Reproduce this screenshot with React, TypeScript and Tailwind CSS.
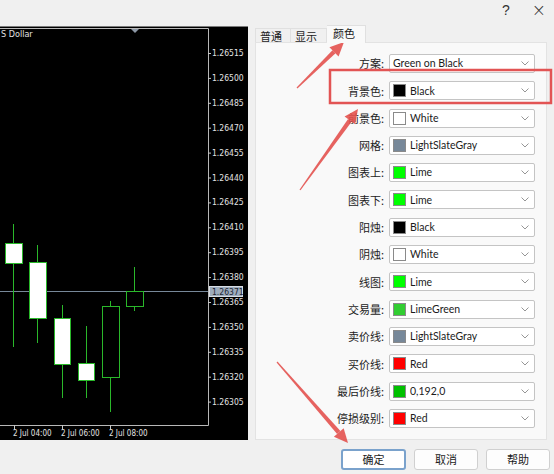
import React from "react";

type Row = { label: string; name: string; color?: string };

const rows: Row[] = [
  { label: "方案:", name: "Green on Black" },
  { label: "背景色:", name: "Black", color: "#000000" },
  { label: "前景色:", name: "White", color: "#ffffff" },
  { label: "网格:", name: "LightSlateGray", color: "#778899" },
  { label: "图表上:", name: "Lime", color: "#00ff00" },
  { label: "图表下:", name: "Lime", color: "#00ff00" },
  { label: "阳烛:", name: "Black", color: "#000000" },
  { label: "阴烛:", name: "White", color: "#ffffff" },
  { label: "线图:", name: "Lime", color: "#00ff00" },
  { label: "交易量:", name: "LimeGreen", color: "#32cd32" },
  { label: "卖价线:", name: "LightSlateGray", color: "#778899" },
  { label: "买价线:", name: "Red", color: "#ff0000" },
  { label: "最后价线:", name: "0,192,0", color: "#00c000" },
  { label: "停损级别:", name: "Red", color: "#ff0000" },
];

const prices = [
  "1.26515", "1.26500", "1.26485", "1.26470", "1.26455", "1.26440", "1.26425", "1.26410",
  "1.26395", "1.26380", "1.26365", "1.26350", "1.26335", "1.26320", "1.26305",
];

// x, width, body top, body bottom, wick top, wick bottom, hollow (bullish)
const candles = [
  { x: 5, w: 17, top: 243, bot: 263, hi: 224, lo: 347, up: false },
  { x: 29, w: 17, top: 262, bot: 318, hi: 245, lo: 343, up: false },
  { x: 54, w: 16, top: 318, bot: 364, hi: 305, lo: 398, up: false },
  { x: 78, w: 16, top: 363, bot: 380, hi: 326, lo: 398, up: false },
  { x: 102, w: 17, top: 306, bot: 377, hi: 301, lo: 412, up: true },
  { x: 126, w: 17, top: 291, bot: 306, hi: 267, lo: 311, up: true },
];

const axisFont = "'DejaVu Sans Condensed','DejaVu Sans', sans-serif";

function Chart() {
  return (
    <svg width={248} height={414} viewBox="0 26 248 414" className="block">
      <rect x={0} y={26} width={248} height={414} fill="#000" />
      <line x1={0} y1={26.5} x2={248} y2={26.5} stroke="#7a7a7a" />
      <line x1={0} y1={28.5} x2={208.5} y2={28.5} stroke="#b8b8b8" />
      <line x1={208.5} y1={28.5} x2={208.5} y2={425.5} stroke="#b8b8b8" />
      <line x1={0} y1={425.5} x2={208.5} y2={425.5} stroke="#b8b8b8" />
      <polygon points="131,29 139,29 135,33" fill="#8d98a6" />
      <text x={1} y={37} fontSize={9} fill="#e0e0e0" fontFamily={axisFont}>S Dollar</text>

      {prices.map((p, i) => {
        const y = 53 + i * 24.9;
        return (
          <g key={p}>
            <line x1={208} y1={y + 0.5} x2={211} y2={y + 0.5} stroke="#c8c8c8" />
            <text x={212} y={y + 3} fontSize={8.5} fill="#e4e4e4" fontFamily={axisFont}>{p}</text>
          </g>
        );
      })}

      {/* bid line */}
      <line x1={0} y1={291.5} x2={208} y2={291.5} stroke="#778899" />
      <rect x={209.5} y={286.5} width={33} height={10} fill="#9eacbd" stroke="#d8dde4" />
      <text x={212} y={294.5} fontSize={8.5} fill="#1d2633" fontFamily={axisFont}>1.26371</text>

      {candles.map((c, i) => {
        const cx = c.x + Math.floor(c.w / 2) + 0.5;
        return (
          <g key={i}>
            <line x1={cx} y1={c.hi} x2={cx} y2={c.top} stroke="#2ab82a" />
            <line x1={cx} y1={c.bot} x2={cx} y2={c.lo} stroke="#2ab82a" />
            <rect x={c.x + 0.5} y={c.top + 0.5} width={c.w} height={c.bot - c.top} fill={c.up ? "#000" : "#fff"} stroke="#2ab82a" />
          </g>
        );
      })}

      {[
        { x: 14, t: "2 Jul 04:00" },
        { x: 62, t: "2 Jul 06:00" },
        { x: 110, t: "2 Jul 08:00" },
      ].map((l) => (
        <g key={l.t}>
          <line x1={l.x + 0.5} y1={425} x2={l.x + 0.5} y2={429} stroke="#c8c8c8" />
          <text x={l.x - 1} y={436} fontSize={8} fill="#e4e4e4" fontFamily={axisFont}>{l.t}</text>
        </g>
      ))}
    </svg>
  );
}

function Chevron() {
  return (
    <svg width={8} height={5} viewBox="0 0 8 5" className="shrink-0">
      <polyline points="0.5,0.5 4,4 7.5,0.5" fill="none" stroke="#8a8a8a" strokeWidth={0.9} />
    </svg>
  );
}

function Arrow({ from, to }: { from: [number, number]; to: [number, number] }) {
  const dx = to[0] - from[0];
  const dy = to[1] - from[1];
  const len = Math.hypot(dx, dy);
  const ux = dx / len;
  const uy = dy / len;
  const px = -uy;
  const py = ux;
  const bx = to[0] - ux * 14;
  const by = to[1] - uy * 14;
  const shaft = [
    [from[0] + px * 0.6, from[1] + py * 0.6],
    [bx + px * 2.2, by + py * 2.2],
    [bx - px * 2.2, by - py * 2.2],
    [from[0] - px * 0.6, from[1] - py * 0.6],
  ];
  const head = [to, [bx + px * 6.5, by + py * 6.5], [bx - px * 6.5, by - py * 6.5]];
  const pts = (a: number[][]) => a.map((p) => p.join(",")).join(" ");
  return (
    <g fill="#e4524f" opacity={0.9}>
      <polygon points={pts(shaft)} />
      <polygon points={pts(head)} />
    </g>
  );
}

export default function App() {
  return (
    <div className="relative w-[554px] h-[474px] bg-[#f0f0f0] overflow-hidden font-['Noto_Sans_CJK_SC',sans-serif] text-[#1b1b1b]">
      {/* Title bar */}
      <div className="h-[26px] flex items-start justify-end pr-[8px] pt-[1px] gap-[22px] text-[#333]">
        <span className="text-[14px] leading-[18px] font-['Liberation_Sans',sans-serif]">?</span>
        <span className="text-[17px] leading-[18px] font-['DejaVu_Sans',sans-serif] font-light">×</span>
      </div>

      <div className="flex h-[414px]">
        <div className="w-[248px] shrink-0">
          <Chart />
        </div>

        <div className="ml-[7px] w-[292px] flex flex-col">
          {/* Tabs */}
          <div className="h-[16px] flex items-end text-[11px]">
            <div className="w-[36px] h-[14px] border border-b-0 border-[#e0e0e0] bg-[#f0f0f0] pl-[4px] leading-[14px]">普通</div>
            <div className="w-[36px] h-[14px] border border-b-0 border-l-0 border-[#e0e0e0] bg-[#f0f0f0] pl-[4px] leading-[14px]">显示</div>
            <div className="w-[39px] h-[18px] border border-b-0 border-l-0 border-[#e0e0e0] bg-[#f9f9f9] pl-[6px] leading-[15px] relative z-10 -mb-px">颜色</div>
          </div>

          {/* Panel */}
          <div className="flex-1 border border-[#e3e3e3] bg-[#f9f9f9] pt-[11px] flex flex-col gap-[8.3px]">
            {rows.map((r, i) => (
              <div key={i} className="flex items-center h-[19px]">
                <div className="w-[128px] text-right text-[11px] text-[#222]">{r.label}</div>
                <div className="ml-[5px] w-[146px] h-[19px] bg-white border border-[#c4c4c4] rounded-[2px] flex items-center pl-[3px] pr-[5px]">
                  {r.color && (
                    <span className="w-[13px] h-[13px] shrink-0 border border-[#8a8a8a] mr-[4px]" style={{ backgroundColor: r.color }} />
                  )}
                  <span className="flex-1 text-[10.5px] leading-none text-[#1b1b1b] font-['Lato',sans-serif]">{r.name}</span>
                  <Chevron />
                </div>
              </div>
            ))}
          </div>
        </div>
      </div>

      {/* Buttons */}
      <div className="flex justify-end gap-[8px] pt-[9px] pr-[4px] text-[11px]">
        <button className="w-[65px] h-[21px] bg-white border-2 border-[#7aa2cc] rounded-[3px] leading-none">确定</button>
        <button className="w-[64px] h-[21px] bg-[#fdfdfd] border border-[#d0d0d0] rounded-[3px] leading-none">取消</button>
        <button className="w-[64px] h-[21px] bg-[#fdfdfd] border border-[#d0d0d0] rounded-[3px] leading-none">帮助</button>
      </div>

      {/* Annotations */}
      <svg className="absolute inset-0 pointer-events-none" width={554} height={474}>
        <rect x={330} y={70} width={221} height={33} fill="none" stroke="#e25454" strokeWidth={2.5} />
        <Arrow from={[297, 88]} to={[344, 42]} />
        <Arrow from={[300, 190]} to={[358, 109]} />
        <Arrow from={[277, 362]} to={[348, 443]} />
      </svg>
    </div>
  );
}
